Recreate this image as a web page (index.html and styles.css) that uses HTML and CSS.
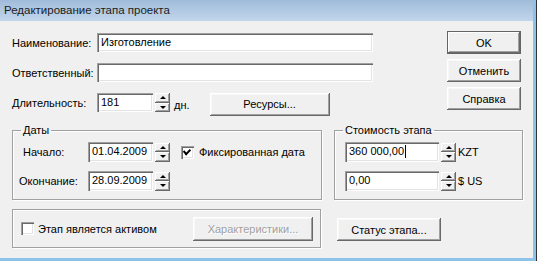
FILE: index.html
```html
<!DOCTYPE html>
<html lang="ru">
<head>
  <meta charset="UTF-8">
  <title>Редактирование этапа проекта</title>
  <link rel="stylesheet" href="styles.css">
</head>
<body>
  <div class="window">
    <div class="titlebar">Редактирование этапа проекта</div>

    <div class="client">
      <!-- Main fields and dialog buttons -->
      <div class="top">
        <div class="fields">
          <div class="row">
            <span class="lbl">Наименование:</span>
            <div class="edit name">Изготовление</div>
          </div>
          <div class="row">
            <span class="lbl">Ответственный:</span>
            <div class="edit name"></div>
          </div>
          <div class="row">
            <span class="lbl">Длительность:</span>
            <div class="edit days">181</div>
            <div class="spin"><span class="up"></span><span class="down"></span></div>
            <span class="unit">дн.</span>
            <button class="btn resources">Ресурсы...</button>
          </div>
        </div>
        <div class="actions">
          <button class="btn default">OK</button>
          <button class="btn">Отменить</button>
          <button class="btn">Справка</button>
        </div>
      </div>

      <!-- Dates and cost groups -->
      <div class="groups">
        <fieldset class="group dates">
          <legend>Даты</legend>
          <div class="grow">
            <span class="lbl short start">Начало:</span>
            <div class="edit date">01.04.2009</div>
            <div class="spin"><span class="up"></span><span class="down"></span></div>
            <span class="check checked"></span>
            <span class="check-text">Фиксированная дата</span>
          </div>
          <div class="grow">
            <span class="lbl short">Окончание:</span>
            <div class="edit date">28.09.2009</div>
            <div class="spin"><span class="up"></span><span class="down"></span></div>
          </div>
        </fieldset>
        <fieldset class="group cost">
          <legend>Стоимость этапа</legend>
          <div class="grow">
            <div class="edit money">360 000,00<span class="caret"></span></div>
            <div class="spin"><span class="up"></span><span class="down"></span></div>
            <span class="currency">KZT</span>
          </div>
          <div class="grow">
            <div class="edit money">0,00</div>
            <div class="spin"><span class="up"></span><span class="down"></span></div>
            <span class="currency">$ US</span>
          </div>
        </fieldset>
      </div>

      <!-- Asset flag and stage status -->
      <div class="bottom">
        <div class="frame asset">
          <span class="check"></span>
          <span class="check-text">Этап является активом</span>
          <button class="btn features" disabled>Характеристики...</button>
        </div>
        <button class="btn status">Статус этапа...</button>
      </div>
    </div>
  </div>
</body>
</html>
```

FILE: styles.css
```css
/* General */
body {
  margin: 0;
  background: #ffffff;
  font-family: 'Liberation Sans', Arial, sans-serif;
  font-size: 11px;
  color: #000;
}

.window {
  width: 533px;
  height: 258px;
  background: #f0f0f0;
  border-right: 3px solid #8dc2ea;
  border-bottom: 3px solid #8dc2ea;
  box-shadow: 1px 0 0 #333;
  overflow: hidden;
}

.titlebar {
  height: 21px;
  line-height: 20px;
  padding-left: 4px;
  font-size: 11.5px;
  color: #1c1c1c;
  background: linear-gradient(#a0bbda, #c2d6ec);
}

.client {
  padding: 12px 0 0 12px;
}

/* Top section */
.top {
  display: flex;
}

.fields {
  width: 361px;
}

.row {
  display: flex;
  align-items: center;
  height: 19px;
  margin-bottom: 11px;
}

.row:last-child {
  margin-bottom: 0;
}

.lbl {
  width: 85px;
  flex: none;
}

.edit {
  box-sizing: border-box;
  height: 19px;
  padding: 3px 0 0 4px;
  background: #fff;
  white-space: nowrap;
  box-shadow: inset 1px 1px 0 #a0a0a0, inset 2px 2px 0 #696969,
    inset -1px -1px 0 #fff, inset -2px -2px 0 #e3e3e3;
}

.edit.name {
  width: 276px;
}

.edit.days {
  width: 56px;
}

.edit.date {
  width: 65px;
  height: 20px;
}

.edit.money {
  width: 94px;
  height: 20px;
}

.caret {
  display: inline-block;
  width: 1px;
  height: 13px;
  margin-left: 1px;
  vertical-align: -3px;
  background: #000;
}

/* Spin buttons */
.spin {
  display: flex;
  flex-direction: column;
  width: 15px;
  height: 19px;
  margin-left: 2px;
  flex: none;
}

.spin span {
  flex: 1;
  position: relative;
  background: #f0f0f0;
  box-shadow: inset -1px -1px 0 #696969, inset 1px 1px 0 #fff,
    inset -2px -2px 0 #a0a0a0;
}

.spin span::after {
  content: '';
  position: absolute;
  left: 5px;
  top: 3px;
  border-left: 3px solid transparent;
  border-right: 3px solid transparent;
}

.spin .up::after {
  border-bottom: 3px solid #000;
}

.spin .down::after {
  border-top: 3px solid #000;
}

.unit {
  margin-left: 4px;
  margin-top: 4px;
}

/* Buttons */
.btn {
  box-sizing: border-box;
  height: 23px;
  padding: 0;
  border: none;
  background: #f0f0f0;
  font-family: inherit;
  font-size: 11px;
  color: #000;
  box-shadow: inset -1px -1px 0 #696969, inset 1px 1px 0 #fff,
    inset -2px -2px 0 #a0a0a0, inset 2px 2px 0 #f8f8f8;
}

.btn:disabled {
  color: #a0a0a0;
  text-shadow: 1px 1px 0 #fff;
}

.btn.default {
  box-shadow: inset 0 0 0 1px #646464, inset -2px -2px 0 #696969,
    inset 2px 2px 0 #fff, inset -3px -3px 0 #a0a0a0;
}

.btn.resources {
  width: 120px;
  margin-left: 20px;
  margin-top: 3px;
}

.actions {
  display: flex;
  flex-direction: column;
  gap: 5px;
  width: 74px;
  margin-left: 74px;
  margin-top: -2px;
}

/* Group boxes */
.groups {
  display: flex;
  gap: 12px;
  margin-top: 12px;
}

.group {
  box-sizing: border-box;
  margin: 0;
  padding: 0 0 8px 6px;
  border: 1px solid #a0a0a0;
  box-shadow: 1px 1px 0 #fff, inset 1px 1px 0 #fff;
}

.group legend {
  margin-left: 2px;
  padding: 0 2px;
  line-height: 13px;
}

.group.dates {
  width: 310px;
}

.group.cost {
  width: 189px;
}

.grow {
  display: flex;
  align-items: center;
  height: 20px;
  margin-top: 5px;
}

.grow + .grow {
  margin-top: 9px;
}

.lbl.short {
  width: 69px;
}

.lbl.start {
  box-sizing: border-box;
  padding-left: 4px;
}

.cost .edit {
  margin-left: 4px;
}

.currency {
  margin-left: 2px;
}

/* Checkboxes */
.check {
  box-sizing: border-box;
  width: 13px;
  height: 13px;
  flex: none;
  position: relative;
  background: #fff;
  box-shadow: inset 1px 1px 0 #a0a0a0, inset 2px 2px 0 #696969,
    inset -1px -1px 0 #fff, inset -2px -2px 0 #e3e3e3;
}

.grow .check {
  margin-left: 11px;
}

.check.checked::after {
  content: '';
  position: absolute;
  left: 3px;
  top: 2px;
  width: 5px;
  height: 3px;
  border-left: 2px solid #000;
  border-bottom: 2px solid #000;
  transform: translate(0, 1px) rotate(-45deg) skew(-5deg);
  transform-origin: 40% 60%;
}

.check-text {
  margin-left: 5px;
}

/* Bottom row */
.bottom {
  display: flex;
  align-items: center;
  margin-top: 9px;
}

.frame {
  box-sizing: border-box;
  display: flex;
  align-items: center;
  width: 309px;
  height: 39px;
  padding: 0 7px 0 8px;
  border: 1px solid #a0a0a0;
  box-shadow: 1px 1px 0 #fff, inset 1px 1px 0 #fff;
}

.asset .check-text {
  margin-left: 4px;
}

.btn.features {
  width: 120px;
  height: 24px;
  margin-left: auto;
}

.btn.status {
  width: 104px;
  margin-left: 16px;
  margin-top: 2px;
}
```
